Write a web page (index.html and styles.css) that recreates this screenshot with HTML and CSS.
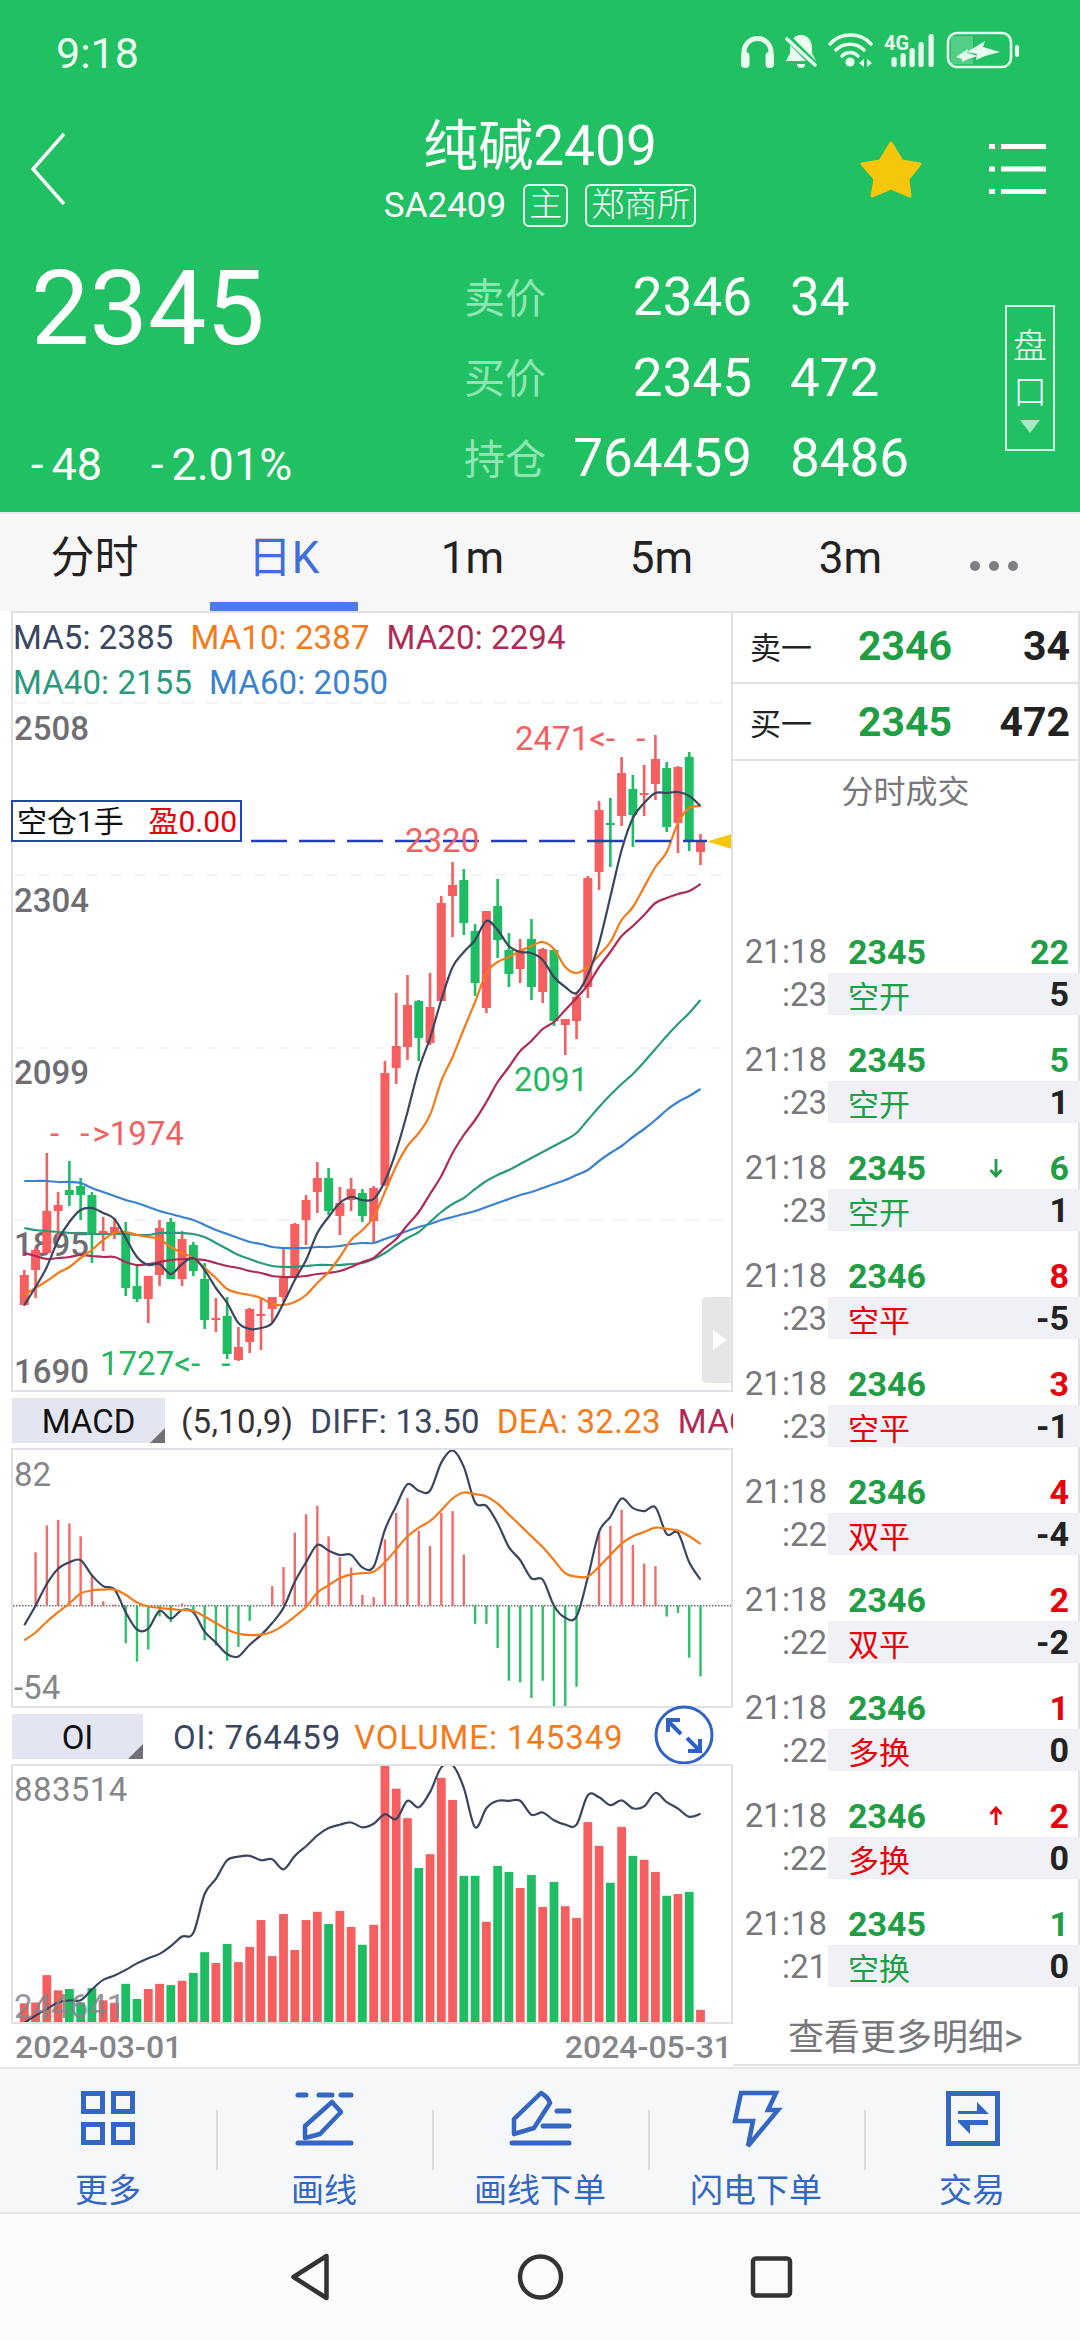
FILE: index.html
```html
<!DOCTYPE html>
<html lang="zh">
<head>
  <meta charset="UTF-8" />
  <meta name="viewport" content="width=device-width, initial-scale=1.0"/>
  <title>纯碱2409</title>
  <link rel="stylesheet" href="styles.css">
</head>
<body>
  <header class="header">
    <div class="status">
      <span class="clock">9:18</span>
      <svg class="status-icons" width="280" height="42" viewBox="740 30 280 42">
        <!-- headphones -->
        <path d="M743 60V52a13.5 13.5 0 0 1 27 0V60" fill="none" stroke="#e8fbef" stroke-width="5"/>
        <rect x="740" y="52" width="8.500" height="16" rx="4" fill="#e8fbef"/>
        <rect x="764.500" y="52" width="8.500" height="16" rx="4" fill="#e8fbef"/>
        <!-- muted bell -->
        <path d="M800 35c-7 0-11 6-11 13v5l-4 8h30l-4-8v-5c0-7-4-13-11-13z" fill="#e8fbef"/>
        <path d="M796 64h8a4 4 0 0 1-8 0z" fill="#e8fbef"/>
        <path d="M783 34l33 33" stroke="#21c063" stroke-width="7"/>
        <path d="M786 39l28 26" stroke="#e8fbef" stroke-width="3.6" stroke-linecap="round"/>
        <!-- wifi -->
        <path d="M829 44a28 28 0 0 1 41 0M835 50a20 20 0 0 1 28 0M841 56a11 11 0 0 1 16 0" fill="none" stroke="#e8fbef" stroke-width="3.4" stroke-linecap="round"/>
        <circle cx="849" cy="62" r="4.6" fill="#e8fbef"/>
        <path d="M863 59v8l-5-4zM866 59v8l5-4z" fill="#e8fbef"/>
        <!-- signal -->
        <text class="net" x="883" y="50">4G</text>
        <rect x="890.5" y="57" width="5.2" height="10" rx="2.6" fill="#e8fbef"/>
        <rect x="899.5" y="53" width="5.2" height="14" rx="2.6" fill="#e8fbef"/>
        <rect x="908.5" y="48" width="5.2" height="19" rx="2.6" fill="#e8fbef"/>
        <rect x="917.5" y="42" width="5.2" height="25" rx="2.6" fill="#e8fbef"/>
        <rect x="927.5" y="34" width="5.2" height="33" rx="2.6" fill="#e8fbef"/>
        <!-- battery -->
        <rect x="947" y="33" width="63" height="34" rx="9" fill="none" stroke="#e8fbef" stroke-width="2.6"/>
        <path d="M950 36h22v28h-22z" fill="#e8fbef" opacity=".25"/>
        <rect x="1014" y="45" width="4" height="12" rx="2" fill="#e8fbef"/>
        <path d="M966 52L984 41l-2 6 17 5-15 4-9 4 1-6z" fill="#e8fbef"/>
        <path d="M955 57l12-8-1 4 11 3-10 3-6 3v-3z" fill="#e8fbef"/>
      </svg>
    </div>

    <div class="nav">
      <svg class="nav-back" width="40" height="76" viewBox="0 0 40 76">
        <path d="M35 3L4 38l31 35" fill="none" stroke="#fff" stroke-width="3.4"/>
      </svg>
      <div class="contract">
        <div class="contract-name">纯碱2409</div>
        <div class="contract-sub">
          <span>SA2409</span>
          <span class="tag">主</span>
          <span class="tag">郑商所</span>
        </div>
      </div>
      <svg class="nav-star" width="66" height="62" viewBox="858 139 66 62">
        <path d="M890 143l11 18 18 3-12 15 2 17-19-8-19 8 3-17-13-15 18-3z" fill="#f5c60b" stroke="#f5c60b" stroke-width="3" stroke-linejoin="round"/>
      </svg>
      <svg class="nav-menu" width="58" height="52" viewBox="989 143 58 52">
        <path d="M989 146.500h6M1001 146.500h45M989 169h6M1001 169h45M989 191.500h6M1001 191.500h45" stroke="#fff" stroke-width="5"/>
      </svg>
    </div>

    <div class="quote">
      <div class="price">
        <div class="price-last">2345</div>
        <div class="price-change"><span>-48</span><span>-2.01%</span></div>
      </div>
      <div class="book">
        <span class="book-label">卖价</span><span class="book-num">2346</span><span>34</span>
        <span class="book-label">买价</span><span class="book-num">2345</span><span>472</span>
        <span class="book-label">持仓</span><span class="book-num">764459</span><span>8486</span>
      </div>
      <div class="panko">
        <span>盘</span>
        <span>口</span>
        <i class="panko-arrow"></i>
      </div>
    </div>
  </header>

  <nav class="tabs">
    <a class="tab">分时</a>
    <a class="tab active">日K</a>
    <a class="tab">1m</a>
    <a class="tab">5m</a>
    <a class="tab">3m</a>
    <a class="tab-more"><i></i><i></i><i></i></a>
  </nav>

  <main class="content">
    <section class="charts">
      <div class="panel panel-main">
        <div class="legend">
          <span class="c-ma5">MA5: 2385</span>
          <span class="c-ma10">MA10: 2387</span>
          <span class="c-ma20">MA20: 2294</span>
        </div>
        <div class="legend">
          <span class="c-ma40">MA40: 2155</span>
          <span class="c-ma60">MA60: 2050</span>
        </div>
        <span class="axis a-2508">2508</span>
        <span class="axis a-2304">2304</span>
        <span class="axis a-2099">2099</span>
        <span class="axis a-1895">1895</span>
        <span class="axis a-1690">1690</span>
        <svg id="kline" class="plot" viewBox="13 613 718 777"></svg>
        <span class="mark up n-2471">2471&lt;<span class="dash">- -</span></span>
        <span class="mark up n-2320">2320</span>
        <span class="mark dn n-2091">2091</span>
        <span class="mark up n-1974"><span class="dash">- -</span>&gt;1974</span>
        <span class="mark dn n-1727">1727&lt;<span class="dash">- -</span></span>
        <div class="position"><span>空仓1手</span><span class="position-pl">盈0.00</span></div>
        <div class="handle"></div>
      </div>

      <div class="sub-head">
        <div class="sub-tag sub-tag-macd">MACD</div>
        <div class="sub-vals">
          <span class="c-dark">(5,10,9)</span>
          <span class="c-ma5">DIFF: 13.50</span>
          <span class="c-ma10">DEA: 32.23</span>
          <span class="c-ma20">MACD:</span>
        </div>
      </div>
      <div class="panel panel-sub">
        <span class="axis-sub t-82">82</span>
        <span class="axis-sub t-54">-54</span>
        <svg id="macd" class="plot" viewBox="13 1449 718 256"></svg>
      </div>

      <div class="sub-head">
        <div class="sub-tag sub-tag-oi">OI</div>
        <div class="sub-vals sub-vals-oi">
          <span class="c-ma5">OI: 764459</span>
          <span class="c-ma10">VOLUME: 145349</span>
        </div>
        <svg class="expand" width="60" height="60" viewBox="0 0 60 60">
          <circle cx="30" cy="30" r="28" fill="none" stroke="#2f62c4" stroke-width="3"/>
          <path d="M15 17l12 12M14 27V15h12M33 33l12 12M46 34v12H34" fill="none" stroke="#2f62c4" stroke-width="4"/>
        </svg>
      </div>
      <div class="panel panel-sub">
        <span class="axis-sub t-883">883514</span>
        <svg id="oi" class="plot" viewBox="13 1765 718 256"></svg>
        <span class="axis-sub t-244">244641</span>
      </div>

      <div class="dates"><span>2024-03-01</span><span>2024-05-31</span></div>
    </section>

    <aside class="side">
      <div class="level level-sell">
        <span class="level-name">卖一</span><span class="level-price">2346</span><span class="level-qty">34</span>
      </div>
      <div class="level">
        <span class="level-name">买一</span><span class="level-price">2345</span><span class="level-qty">472</span>
      </div>
      <div class="ticks-title">分时成交</div>

      <div class="tick">
        <span class="tick-time">21:18</span>
        <div class="tick-top"><span class="tick-price">2345</span><span class="tick-vol c-dn">22</span></div>
        <span class="tick-sec">:23</span>
        <div class="tick-info"><span class="c-dn">空开</span><b>5</b></div>
      </div>
      <div class="tick">
        <span class="tick-time">21:18</span>
        <div class="tick-top"><span class="tick-price">2345</span><span class="tick-vol c-dn">5</span></div>
        <span class="tick-sec">:23</span>
        <div class="tick-info"><span class="c-dn">空开</span><b>1</b></div>
      </div>
      <div class="tick">
        <span class="tick-time">21:18</span>
        <div class="tick-top">
          <span class="tick-price">2345</span>
          <svg class="tick-arrow" width="14" height="20" viewBox="0 0 14 20"><path d="M7 1v17M1.500 12L7 18l5.500-6" fill="none" stroke="#1f9e45" stroke-width="2.800"/></svg>
          <span class="tick-vol c-dn">6</span>
        </div>
        <span class="tick-sec">:23</span>
        <div class="tick-info"><span class="c-dn">空开</span><b>1</b></div>
      </div>
      <div class="tick">
        <span class="tick-time">21:18</span>
        <div class="tick-top"><span class="tick-price">2346</span><span class="tick-vol c-up">8</span></div>
        <span class="tick-sec">:23</span>
        <div class="tick-info"><span class="c-up">空平</span><b>-5</b></div>
      </div>
      <div class="tick">
        <span class="tick-time">21:18</span>
        <div class="tick-top"><span class="tick-price">2346</span><span class="tick-vol c-up">3</span></div>
        <span class="tick-sec">:23</span>
        <div class="tick-info"><span class="c-up">空平</span><b>-1</b></div>
      </div>
      <div class="tick">
        <span class="tick-time">21:18</span>
        <div class="tick-top"><span class="tick-price">2346</span><span class="tick-vol c-up">4</span></div>
        <span class="tick-sec">:22</span>
        <div class="tick-info"><span class="c-up">双平</span><b>-4</b></div>
      </div>
      <div class="tick">
        <span class="tick-time">21:18</span>
        <div class="tick-top"><span class="tick-price">2346</span><span class="tick-vol c-up">2</span></div>
        <span class="tick-sec">:22</span>
        <div class="tick-info"><span class="c-up">双平</span><b>-2</b></div>
      </div>
      <div class="tick">
        <span class="tick-time">21:18</span>
        <div class="tick-top"><span class="tick-price">2346</span><span class="tick-vol c-up">1</span></div>
        <span class="tick-sec">:22</span>
        <div class="tick-info"><span class="c-up">多换</span><b>0</b></div>
      </div>
      <div class="tick">
        <span class="tick-time">21:18</span>
        <div class="tick-top">
          <span class="tick-price">2346</span>
          <svg class="tick-arrow" width="14" height="20" viewBox="0 0 14 20"><path d="M7 19V2M1.500 8L7 2l5.500 6" fill="none" stroke="#e8000b" stroke-width="2.800"/></svg>
          <span class="tick-vol c-up">2</span>
        </div>
        <span class="tick-sec">:22</span>
        <div class="tick-info"><span class="c-up">多换</span><b>0</b></div>
      </div>
      <div class="tick">
        <span class="tick-time">21:18</span>
        <div class="tick-top"><span class="tick-price">2345</span><span class="tick-vol c-dn">1</span></div>
        <span class="tick-sec">:21</span>
        <div class="tick-info"><span class="c-dn">空换</span><b>0</b></div>
      </div>

      <div class="ticks-more">查看更多明细&gt;</div>
    </aside>
  </main>

  <div class="toolbar">
    <div class="tool">
      <svg width="64" height="64" viewBox="0 0 64 64">
        <path d="M7.500 6.500h19v18h-19zM37.500 6.500h19v18h-19zM7.500 37.500h19v18h-19zM37.500 37.500h19v18h-19z"/>
      </svg>
      <span>更多</span>
    </div>
    <div class="tool">
      <svg width="64" height="64" viewBox="0 0 64 64">
        <path d="M6 8h8M27 8h13M49 8h10M6 56h53" stroke-linecap="round"/>
        <path d="M40 15l9 10-21 22-15 4v-12z" stroke-width="4.500" stroke-linejoin="round"/>
      </svg>
      <span>画线</span>
    </div>
    <div class="tool">
      <svg width="64" height="64" viewBox="0 0 64 64">
        <path d="M33 6c5 3 8 6 9 10L26 41 6 47V32z" stroke-width="4.500" stroke-linejoin="round"/>
        <path d="M49 24h12M35 39h26M4 56h57" stroke-linecap="round"/>
      </svg>
      <span>画线下单</span>
    </div>
    <div class="tool">
      <svg width="64" height="64" viewBox="0 0 64 64">
        <path d="M17 6h35l-8 17h10L24 59l5-25H11z" stroke-width="4.500"/>
      </svg>
      <span>闪电下单</span>
    </div>
    <div class="tool">
      <svg width="64" height="64" viewBox="0 0 64 64">
        <path d="M8.500 6.500h49v50h-49z"/>
        <path class="tool-fill" d="M18 24h19v-9l12 12H18zM48 33v5H30v9L18 35v-2z"/>
      </svg>
      <span>交易</span>
    </div>
  </div>

  <div class="sysbar">
    <svg width="231" height="60" viewBox="0 0 60 60"><path d="M47 9L14 30l33 21z"/></svg>
    <svg width="231" height="60" viewBox="0 0 60 60"><circle cx="30" cy="30" r="20.500"/></svg>
    <svg width="231" height="60" viewBox="0 0 60 60"><rect x="11.500" y="11.500" width="37" height="37" rx="3"/></svg>
  </div>

  <script src="chart.js"></script>
</body>
</html>
```

FILE: styles.css
```css
:root {
  --green-bg: #21c063;
  --up: #f55f5f;
  --down: #1fbd63;
  --tick-up: #e8000b;
  --tick-down: #1f9e45;
  --line: #dfe1e6;
  --blue: #3467c4;
  --gray: #77777c;
}

* {
  margin: 0;
  padding: 0;
  box-sizing: border-box;
}

body {
  width: 1080px;
  height: 2340px;
  overflow: hidden;
  background: #fff;
  font-family: Roboto, "Noto Sans CJK SC", sans-serif;
  color: #222;
}

/* green header */
.header {
  height: 512px;
  background: var(--green-bg);
  color: #fff;
}

.status {
  height: 100px;
  display: flex;
  align-items: center;
  justify-content: space-between;
  padding: 2px 59px 0 56px;
}

.clock {
  font-size: 43px;
  line-height: 50px;
  padding-top: 3px;
  color: #eafff0;
}

.net {
  font-size: 20px;
  font-weight: 700;
  fill: #e8fbef;
}

.nav {
  height: 132px;
  position: relative;
  padding-top: 16px;
}

.nav-back,
.nav-star,
.nav-menu {
  position: absolute;
}

.nav-back { left: 29px; top: 31px; }
.nav-star { left: 859px; top: 39px; }
.nav-menu { left: 989px; top: 43px; }

.contract {
  text-align: center;
}

.contract-name {
  font-size: 55px;
  line-height: 60px;
}

.contract-sub {
  margin-top: 8px;
  display: flex;
  justify-content: center;
  align-items: center;
  gap: 17px;
  font-size: 35px;
}

.tag {
  height: 43px;
  line-height: 38px;
  padding: 0 4px;
  border: 2px solid #e6fbec;
  border-radius: 6px;
  font-size: 33px;
  font-weight: 300;
}

.quote {
  height: 280px;
  display: flex;
}

.price {
  width: 464px;
  padding: 22px 0 0 31px;
}

.price-last {
  font-size: 104px;
  line-height: 110px;
}

.price-change {
  margin-top: 76px;
  display: flex;
  gap: 49px;
  font-size: 45px;
  line-height: 50px;
}

/* the app's minus sign is much longer than Roboto's hyphen */
.price-change span::first-letter {
  letter-spacing: 8px;
}

.book {
  width: 541px;
  padding-top: 25px;
  display: grid;
  grid-template-columns: 85px 203px 1fr;
  grid-auto-rows: 80.5px;
  align-items: center;
  font-size: 53px;
}

.book span:nth-child(3n) {
  padding-left: 38px;
}

.book-label {
  padding-bottom: 5px;
  font-size: 41px;
  color: #8fe6b3;
}

.book-num {
  text-align: right;
}

.panko {
  width: 50px;
  height: 146px;
  margin-top: 73px;
  border: 2px solid #dcf7e6;
  display: flex;
  flex-direction: column;
  align-items: center;
  padding-top: 16px;
  font-size: 34px;
  line-height: 46px;
  font-weight: 300;
}

.panko-arrow {
  margin-top: 5px;
  border: solid transparent;
  border-width: 13px 10px 0;
  border-top-color: #a7eac2;
}

/* tabs */
.tabs {
  height: 99px;
  display: flex;
  background: #f7f7f7;
  border-top: 2px solid #e8eaee;
  line-height: 88px;
  font-size: 44px;
}

.tab {
  width: 189px;
  position: relative;
  text-align: center;
  color: #222;
}

.tab.active {
  color: #3f6fd8;
}

.tab.active::after {
  content: "";
  position: absolute;
  left: 21px;
  right: 20px;
  bottom: 0;
  height: 9px;
  background: #4b7be5;
}

.tab-more {
  flex: 1;
  display: flex;
  justify-content: center;
  gap: 9px;
  padding: 47px 38px 0 0;
}

.tab-more i {
  width: 10px;
  height: 10px;
  border-radius: 50%;
  background: #7d7f85;
}

/* chart area */
.content {
  height: 1456px;
  display: flex;
}

.charts {
  width: 733px;
  padding-left: 11px;
}

.panel {
  position: relative;
  border: 2px solid var(--line);
}

.panel-main {
  height: 781px;
}

.panel-sub {
  height: 260px;
}

.plot {
  position: absolute;
  left: 0;
  top: 0;
  width: 718px;
  height: 100%;
}

.legend {
  display: flex;
  gap: 17px;
  font-size: 33px;
  line-height: 45px;
  letter-spacing: .1px;
}

.legend:first-child {
  padding-top: 2px;
  height: 47px;
}

.c-dark { color: #333; }
.c-ma5 { color: #3a4560; }
.c-ma10 { color: #f47a1a; }
.c-ma20 { color: #b02a55; }
.c-ma40 { color: #2a9a7c; }
.c-ma60 { color: #3a82d0; }

.axis,
.mark {
  position: absolute;
  left: 1px;
  font-size: 33px;
  line-height: 34px;
  white-space: pre;
}

.axis {
  font-weight: 500;
  color: #6e6e73;
}

.a-2508 { top: 99px; }
.a-2304 { top: 271px; }
.a-2099 { top: 443px; }
.a-1895 { top: 615px; }
.a-1690 { top: 742px; }

.mark.up { color: var(--up); }
.mark.dn { color: #23b75f; }

.dash {
  letter-spacing: 3px;
  word-spacing: 7px;
}

.n-2471 { left: 502px; top: 109px; }
.n-2320 { left: 392px; top: 211px; }
.n-2091 { left: 501px; top: 450px; }
.n-1974 { left: 37px; top: 504px; }
.n-1727 { left: 87px; top: 734px; }

.position {
  position: absolute;
  left: -2px;
  top: 187px;
  width: 231px;
  height: 42px;
  padding: 0 3px 0 4px;
  display: flex;
  justify-content: space-between;
  background: #fff;
  border: 2px solid #2244bb;
  font-size: 30px;
  line-height: 40px;
  color: #111;
}

.position-pl {
  color: #e8000b;
}

.handle {
  position: absolute;
  left: 689px;
  top: 684px;
  width: 29px;
  height: 86px;
  background: #e6e6e6;
  border-radius: 4px 0 0 4px;
}

.handle::after {
  content: "";
  position: absolute;
  left: 11px;
  top: 33px;
  border: solid transparent;
  border-width: 10px 0 10px 14px;
  border-left-color: #fff;
}

.sub-head {
  height: 45px;
  margin: 6px 0 5px;
  position: relative;
  display: flex;
  gap: 16px;
  font-size: 33px;
  line-height: 48px;
}

.sub-tag {
  position: relative;
  margin-left: 1px;
  flex: none;
  text-align: center;
  background: #e3e6f0;
  color: #111;
}

.sub-tag::after {
  content: "";
  position: absolute;
  right: 0;
  bottom: 0;
  border: solid transparent;
  border-width: 0 0 15px 15px;
  border-bottom-color: #6f6f75;
}

.sub-tag-macd { width: 153px; }
.sub-tag-oi { width: 131px; }

.sub-vals {
  display: flex;
  gap: 17px;
  min-width: 0;
  flex: 1;
  overflow: hidden;
  white-space: nowrap;
  letter-spacing: .3px;
}

.sub-vals-oi {
  padding-left: 14px;
  gap: 13px;
  letter-spacing: .9px;
}

.expand {
  position: absolute;
  left: 643px;
  top: -9px;
}

.axis-sub {
  position: absolute;
  left: 1px;
  font-size: 33px;
  line-height: 34px;
  color: #85868a;
}

.t-82 { top: 8px; }
.t-54 { top: 221px; }
.t-883 { top: 7px; letter-spacing: .4px; }
.t-244 { top: 224px; opacity: .85; }

.dates {
  height: 44px;
  padding: 0 1px 0 4px;
  display: flex;
  justify-content: space-between;
  font-size: 32px;
  line-height: 46px;
  font-weight: 500;
  color: #85868a;
}

/* right side list */
.side {
  width: 347px;
  border-top: 2px solid var(--line);
  border-right: 2px solid var(--line);
  border-bottom: 2px solid var(--line);
  height: 1455px;
}

.level {
  height: 77px;
  padding: 0 8px 0 17px;
  display: grid;
  grid-template-columns: 108px 1fr auto;
  align-items: center;
  border-bottom: 2px solid var(--line);
}

.level-sell {
  height: 71px;
  padding-bottom: 4px;
}

.level-name {
  font-size: 31px;
}

.level-price {
  font-size: 41px;
  font-weight: 700;
  color: var(--tick-down);
}

.level-qty {
  font-size: 41px;
  font-weight: 700;
}

.ticks-title {
  height: 176px;
  padding-top: 12px;
  text-align: center;
  font-size: 32px;
  line-height: 38px;
  color: var(--gray);
}

.tick {
  height: 108px;
  display: grid;
  grid-template-columns: 95px 1fr;
  grid-template-rows: 36px 42px;
  font-size: 33px;
}

.tick-time,
.tick-sec {
  text-align: right;
  padding-right: 1px;
  color: var(--gray);
  line-height: 30px;
}

.tick-sec {
  line-height: 44px;
}

.tick-top {
  display: flex;
  align-items: center;
  padding: 0 9px 6px 20px;
  font-size: 34px;
  font-weight: 700;
}

.tick-price {
  flex: 1;
  color: var(--tick-down);
}

.tick-arrow {
  margin-right: 46px;
}

.tick-info {
  margin-right: -2px;
  display: flex;
  justify-content: space-between;
  align-items: center;
  padding: 0 11px 0 20px;
  background: #f0f1f6;
  font-size: 31px;
}

.tick-info b {
  font-size: 34px;
}

.c-up { color: var(--tick-up); }
.c-dn { color: var(--tick-down); }

.ticks-more {
  margin-top: -1px;
  text-align: center;
  font-size: 36px;
  line-height: 44px;
  color: var(--gray);
}

/* bottom bars */
.toolbar {
  height: 147px;
  display: flex;
  background: #f6f7f8;
  border-top: 2px solid #e3e5e8;
  border-bottom: 2px solid #e3e5e8;
}

.tool {
  width: 216px;
  position: relative;
  display: flex;
  flex-direction: column;
  align-items: center;
  padding-top: 18px;
  font-size: 33px;
  line-height: 40px;
  color: var(--blue);
}

.tool + .tool::before {
  content: "";
  position: absolute;
  left: 0;
  top: 41px;
  height: 60px;
  width: 2px;
  background: #dcdee2;
}

.tool svg {
  margin-bottom: 20px;
  fill: none;
  stroke: var(--blue);
  stroke-width: 5;
}

.tool .tool-fill {
  fill: var(--blue);
  stroke: none;
}

.sysbar {
  height: 126px;
  display: flex;
  justify-content: center;
  align-items: center;
  background: #fbfbfb;
}

.sysbar svg {
  fill: none;
  stroke: #333;
  stroke-width: 4.500;
  stroke-linejoin: round;
}
```

FILE: chart.js
```js
const SVG_UP = "#f55f5f";
const SVG_DOWN = "#1fbd63";

// x of candle i, same for all three charts
const xAt = (i) => 24.3 + 11.27 * i;

// R = up day, G = down day
const sides = "RRRRGGGRRGGRRGRGGRGRRRRRRRRGRRGRRRRGRRRGGRGGRGRGRRRRGRGRRGRGR";

// [wick top, body top, body bottom, wick bottom]
const candles = [
  [1270,1275,1305,1306],[1248,1250,1270,1298],[1153,1211,1253,1253],[1192,1205,1211,1240],
  [1161,1190,1195,1206],[1178,1186,1195,1220],[1192,1195,1235,1263],[1217,1231,1234,1251],
  [1218,1227,1233,1239],[1222,1233,1288,1296],[1266,1286,1299,1302],[1276,1276,1299,1323],
  [1220,1228,1275,1286],[1218,1222,1279,1279],[1231,1239,1279,1286],[1242,1245,1271,1276],
  [1263,1279,1320,1329],[1298,1318,1319,1332],[1297,1316,1354,1359],[1327,1347,1360,1361],
  [1308,1309,1342,1353],[1297,1314,1315,1350],[1297,1297,1309,1322],[1248,1278,1297,1302],
  [1223,1224,1277,1277],[1195,1200,1220,1245],[1162,1178,1192,1213],[1168,1178,1211,1215],
  [1187,1203,1216,1235],[1178,1189,1200,1211],[1189,1193,1216,1222],[1186,1188,1221,1243],
  [1061,1073,1185,1186],[993,1046,1068,1084],[975,1005,1047,1060],[1000,1001,1038,1061],
  [973,1007,1043,1045],[896,903,1001,1001],[862,885,896,937],[869,880,923,935],
  [924,931,983,996],[911,911,1008,1013],[879,906,940,958],[933,950,974,987],
  [939,950,969,983],[919,939,987,1000],[948,949,992,1003],[949,950,1021,1026],
  [1019,1019,1025,1055],[993,997,1021,1039],[876,878,987,998],[801,810,872,890],
  [798,823,825,867],[757,773,816,826],[775,789,815,847],[765,793,794,816],
  [735,759,784,800],[762,768,827,832],[766,767,823,853],[752,757,841,851],[834,841,852,865],
];

const ma = {
  "#3a82d0": [1181,1181,1181,1182,1182,1183,1188,1192,1196,1200,1203,1207,1211,1214,1217,1220,1225,1230,1234,1238,1242,1244,1247,1248,1248,1248,1247,1247,1246,1244,1243,1243,1239,1235,1231,1227,1224,1220,1217,1214,1211,1207,1203,1199,1195,1192,1188,1184,1180,1175,1170,1161,1153,1146,1137,1129,1120,1110,1102,1096,1089],
  "#2a9a7c": [1228,1230,1231,1232,1233,1233,1234,1234,1234,1234,1235,1235,1233,1233,1233,1234,1237,1243,1249,1255,1259,1263,1266,1267,1267,1266,1265,1265,1265,1264,1263,1259,1253,1245,1238,1232,1222,1212,1204,1198,1189,1181,1175,1170,1164,1158,1152,1146,1140,1133,1120,1107,1095,1084,1074,1062,1049,1036,1024,1013,1000],
  "#b02a55": [1253,1256,1259,1258,1257,1255,1256,1257,1257,1262,1265,1264,1262,1260,1259,1259,1260,1263,1266,1268,1271,1273,1276,1277,1277,1276,1274,1273,1271,1267,1262,1258,1248,1239,1225,1212,1194,1176,1153,1135,1120,1102,1082,1067,1051,1041,1029,1022,1010,998,985,967,952,936,926,915,903,898,894,891,884],
  "#f47a1a": [1295,1288,1281,1273,1267,1258,1250,1240,1233,1232,1235,1237,1239,1247,1253,1258,1268,1278,1289,1293,1295,1298,1304,1305,1302,1295,1283,1272,1257,1240,1230,1217,1192,1166,1146,1133,1115,1081,1057,1029,1002,973,962,957,951,946,942,949,967,973,967,955,942,920,907,887,867,852,823,808,806],
  "#3a4560": [1305,1287,1267,1240,1222,1210,1208,1213,1219,1238,1257,1265,1264,1274,1264,1258,1270,1288,1303,1323,1329,1328,1323,1303,1280,1260,1233,1217,1203,1197,1200,1199,1181,1151,1112,1069,1038,1000,967,952,940,921,930,946,952,953,960,977,987,993,975,943,897,850,818,803,793,793,792,796,806],
};

// values below are read off at 2.306 units per pixel from y = 1390
const subY = (v) => 1390 + v / 2.306;

const histogram = [495,372,310,297,305,335,425,485,492,582,624,596,520,533,490,505,575,587,622,590,530,495,450,406,327,284,265,335,383,407,470,475,342,281,247,322,357,281,277,377,537,537,593,668,672,708,668,730,730,682,492,325,311,274,355,398,404,520,512,615,658];
const diff = [540,495,445,410,395,390,425,450,458,510,550,548,507,525,505,510,555,580,607,612,585,563,535,500,440,395,355,368,378,378,407,405,320,265,215,230,230,165,137,175,257,265,305,360,390,432,435,495,523,520,430,325,290,248,270,277,268,330,327,395,435];
const dea = [575,557,532,510,490,467,460,458,458,470,488,497,500,503,505,507,520,535,550,560,563,562,555,540,520,498,465,448,432,423,420,417,395,365,335,315,300,275,248,234,238,243,260,285,310,335,360,390,420,428,428,405,378,352,335,325,315,318,322,335,353];
const volume = [1412,1410,1347,1382,1379,1410,1377,1405,1411,1367,1402,1379,1367,1370,1360,1342,1294,1319,1275,1317,1282,1220,1303,1206,1289,1220,1201,1229,1199,1236,1277,1231,862,917,985,1100,1068,892,943,1118,1118,1224,1095,1109,1146,1116,1190,1132,1188,1215,994,1049,1134,1005,1072,1081,1109,1164,1160,1155,1427];
const oi = [1457,1440,1425,1410,1405,1405,1380,1358,1348,1335,1320,1308,1298,1280,1258,1250,1160,1125,1082,1074,1072,1082,1080,1103,1072,1050,1025,1008,1000,995,1006,998,976,987,945,960,925,868,863,915,1006,962,945,945,945,977,972,990,1000,1000,932,937,955,944,962,958,927,948,963,982,975];

// catmull-rom through the points, the app's lines are smoothed
function curve(ys, color, width) {
  const pts = ys.map((y, i) => [xAt(i), y]);
  let d = `M${pts[0][0].toFixed(1)} ${pts[0][1].toFixed(1)}`;
  for (let i = 0; i < pts.length - 1; i++) {
    const p0 = pts[Math.max(i - 1, 0)];
    const p1 = pts[i];
    const p2 = pts[i + 1];
    const p3 = pts[Math.min(i + 2, pts.length - 1)];
    const c1y = p1[1] + (p2[1] - p0[1]) / 6;
    const c2y = p2[1] - (p3[1] - p1[1]) / 6;
    d += `C${(p1[0] + (p2[0] - p0[0]) / 6).toFixed(1)} ${c1y.toFixed(1)} ${(p2[0] - (p3[0] - p1[0]) / 6).toFixed(1)} ${c2y.toFixed(1)} ${p2[0].toFixed(1)} ${p2[1].toFixed(1)}`;
  }
  return `<path d="${d}" fill="none" stroke="${color}" stroke-width="${width}" stroke-linejoin="round"/>`;
}

function gridLine(y) {
  return `<path d="M14 ${y}H731" stroke="#eeeff1" stroke-width="1.500" stroke-dasharray="12 12"/>`;
}

function drawKline() {
  let out = [703, 875, 1048, 1220].map(gridLine).join("");
  candles.forEach(([wt, bt, bb, wb], i) => {
    const c = sides[i] === "R" ? SVG_UP : SVG_DOWN;
    const x = xAt(i);
    out += `<rect x="${x - 1.3}" y="${wt}" width="2.600" height="${wb - wt}" fill="${c}"/>`;
    out += `<rect x="${x - 4.5}" y="${bt}" width="9" height="${Math.max(bb - bt, 2)}" fill="${c}"/>`;
  });
  Object.entries(ma).forEach(([color, ys]) => {
    out += curve(ys, color, 2.2);
  });
  out += `<path d="M251 841H707" stroke="#1f3fbf" stroke-width="2.500" stroke-dasharray="36 12"/>`;
  out += `<path d="M707 841.500L732 834V849z" fill="#f5c60b"/>`;
  document.getElementById("kline").innerHTML = out;
}

function drawMacd() {
  const zero = subY(495);
  let out = `<path d="M13 ${zero}H731" stroke="#666" stroke-width="1.500" stroke-dasharray="1.500 1.500"/>`;
  histogram.forEach((v, i) => {
    if (v === 495) return;
    const y = subY(v);
    const c = v < 495 ? "#f26a6a" : "#2fbf6c";
    out += `<path d="M${xAt(i)} ${zero}V${y}" stroke="${c}" stroke-width="2.400"/>`;
  });
  out += curve(diff.map(subY), "#3a4560", 2.2);
  out += curve(dea.map(subY), "#f47a1a", 2.2);
  document.getElementById("macd").innerHTML = out;
}

function drawOi() {
  const base = subY(1457);
  let out = "";
  volume.forEach((v, i) => {
    const y = subY(v);
    const c = sides[i] === "R" ? SVG_UP : SVG_DOWN;
    out += `<rect x="${xAt(i) - 4.4}" y="${y}" width="8.800" height="${base - y}" fill="${c}"/>`;
  });
  out += curve(oi.map(subY), "#3a4560", 2.2);
  document.getElementById("oi").innerHTML = out;
}

drawKline();
drawMacd();
drawOi();
```
